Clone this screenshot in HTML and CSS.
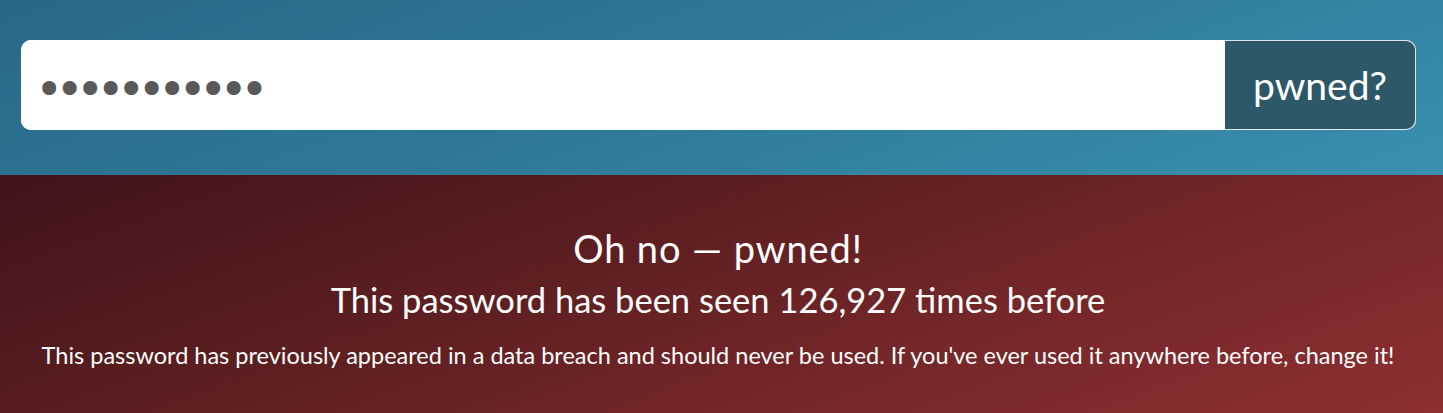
FILE: index.html
```html
<!DOCTYPE html>
<html lang="en">
<head>
<meta charset="utf-8">
<title>Pwned Passwords</title>
<link rel="stylesheet" href="styles.css">
</head>
<body>
<header class="search">
  <form class="search-form">
    <input class="search-input" type="password" value="password123" aria-label="Password">
    <button class="search-button" type="button">pwned?</button>
  </form>
</header>
<section class="result">
  <h2 class="result-title">Oh no — pwned!</h2>
  <p class="result-count">This password has been seen 126,927 times before</p>
  <p class="result-note">This password has previously appeared in a data breach and should never be used. If you've ever used it anywhere before, change it!</p>
</section>
</body>
</html>
```
FILE: styles.css
```css
* { box-sizing: border-box; }
html, body { margin: 0; padding: 0; }
body {
  font-family: Lato, "Open Sans", sans-serif;
  color: #fff;
  width: 1443px;
  height: 413px;
  overflow: hidden;
}
.search {
  height: 175px;
  padding: 40px 27px 0 21px;
  background: linear-gradient(160deg, #296887 0%, #2e7896 45%, #3990ae 100%);
}
.search-form {
  display: flex;
  height: 90px;
  border-radius: 10px;
  background: #fff;
  overflow: hidden;
}
.search-input {
  flex: 1;
  min-width: 0;
  border: 0;
  outline: 0;
  padding: 7px 0 0 14px;
  font-family: "DejaVu Sans", sans-serif;
  font-size: 48px;
  letter-spacing: -7.8px;
  color: #595959;
  background: #fff;
}
.search-button {
  width: 191px;
  border: 1px solid #dfe8ec;
  border-left: 0;
  border-radius: 0 10px 10px 0;
  background: #2d5868;
  color: #fff;
  font-family: Lato, sans-serif;
  font-size: 39px;
  padding: 0;
}
.result {
  height: 238px;
  display: flex;
  flex-direction: column;
  align-items: center;
  padding: 50px 7px 0 0;
  background: linear-gradient(160deg, #41141a 0%, #5a1e20 35%, #742628 65%, #8c3032 100%);
  text-align: center;
}
.result-title {
  margin: 0;
  font-weight: 400;
  font-size: 38px;
  line-height: 46px;
  letter-spacing: 0.9px;
}
.result-count {
  margin: 9px 0 0;
  font-size: 34.5px;
  line-height: 40px;
}
.result-note {
  margin: 21px 0 0;
  font-size: 23.5px;
  line-height: 28px;
}
```
